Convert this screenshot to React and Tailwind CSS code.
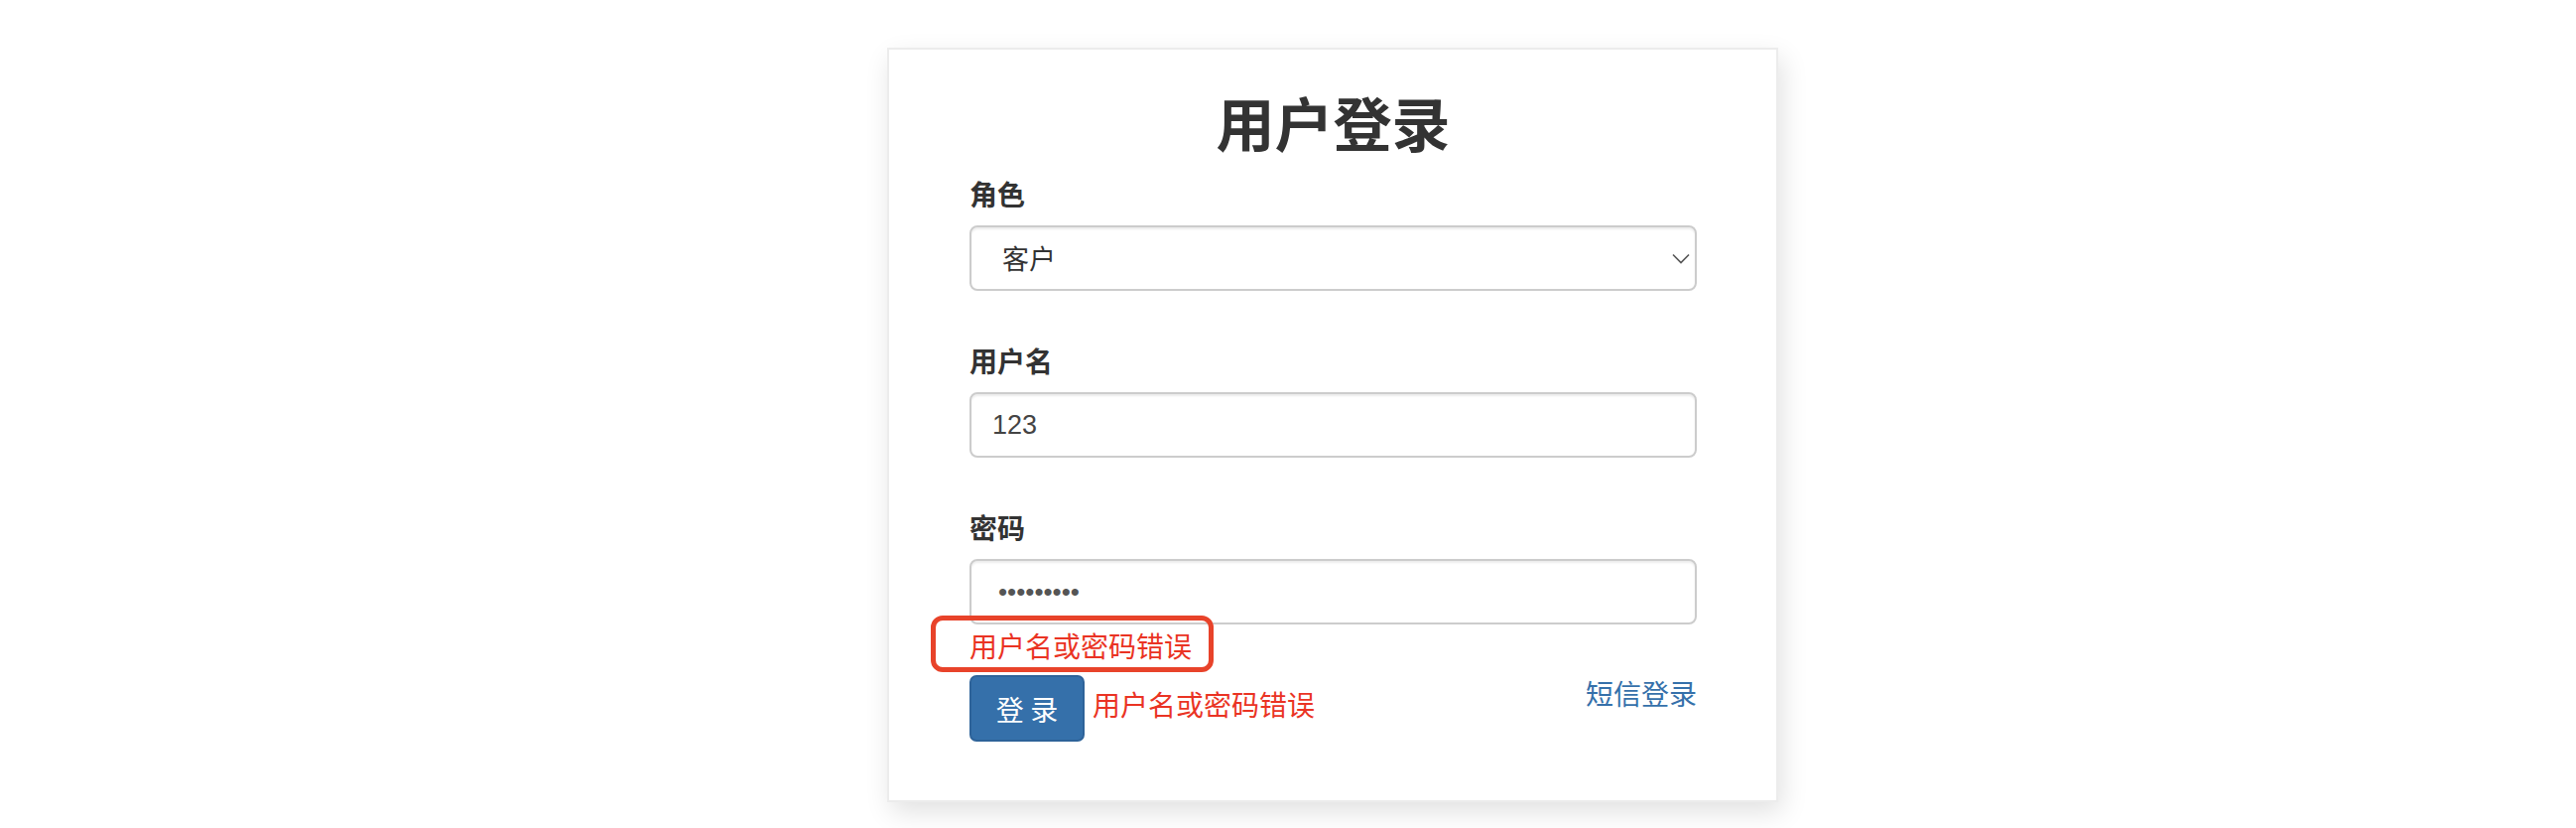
import { useState } from 'react';

const cjk = { fontFamily: '"Noto Sans CJK SC", "Liberation Sans", sans-serif' };
const latin = { fontFamily: '"Liberation Sans", "Noto Sans CJK SC", sans-serif' };

function Field({ label, first, children }) {
  return (
    <div className={first ? 'mt-[20px]' : 'mt-[50px]'}>
      <label className="block text-[28px] leading-[40px] font-bold text-[#333] mb-[12px]">{label}</label>
      {children}
    </div>
  );
}

export default function App() {
  const [role, setRole] = useState('customer');
  const [username, setUsername] = useState('123');
  const [password, setPassword] = useState('123456789');

  return (
    <div className="min-h-screen bg-white pt-[48px]" style={cjk}>
      <div className="relative ml-[894px] w-[898px] bg-white border-2 border-[#ececec] shadow-[4px_10px_25px_rgba(0,0,0,0.12)] pt-[40px] pb-[59px] pl-[81px] pr-[80px]">
        <h1 className="text-center text-[59px] leading-[65px] font-bold text-[#333]">用户登录</h1>

        <Field label="角色" first>
          <div className="relative">
            <select
              value={role}
              onChange={(e) => setRole(e.target.value)}
              className="appearance-none w-full h-[66px] bg-white border-2 border-[#cccccc] rounded-[8px] pl-[31px] text-[27px] text-[#333] outline-none shadow-[inset_0_2px_2px_rgba(0,0,0,0.075)]"
              style={cjk}
            >
              <option value="customer">客户</option>
              <option value="admin">管理员</option>
            </select>
            <svg className="absolute right-[7px] top-[28px] pointer-events-none" width="18" height="11" viewBox="0 0 18 11" fill="none">
              <path d="M1 1.5 L9 9.5 L17 1.5" stroke="#555" strokeWidth="1.6" />
            </svg>
          </div>
        </Field>

        <Field label="用户名">
          <input
            type="text"
            value={username}
            onChange={(e) => setUsername(e.target.value)}
            className="block w-full h-[66px] border-2 border-[#cccccc] rounded-[8px] px-[21px] text-[27px] text-[#444] outline-none shadow-[inset_0_2px_2px_rgba(0,0,0,0.075)]"
            style={latin}
          />
        </Field>

        <Field label="密码">
          <input
            type="password"
            value={password}
            onChange={(e) => setPassword(e.target.value)}
            className="block w-full h-[66px] border-2 border-[#cccccc] rounded-[8px] px-[27px] text-[26px] text-[#555] outline-none shadow-[inset_0_2px_2px_rgba(0,0,0,0.075)]"
            style={latin}
          />
        </Field>

        <div className="relative mt-[1px]">
          <p className="text-[28px] leading-[40px] text-[#ea3323]">用户名或密码错误</p>
          <div className="absolute -left-[39px] -top-[10px] w-[285px] h-[57px] border-[5px] border-[#e8432a] rounded-[12px] pointer-events-none"></div>
        </div>

        <div className="mt-[10px] flex justify-between items-start">
          <div className="flex items-center gap-[8px]">
            <button className="w-[116px] h-[67px] bg-[#3570aa] border-2 border-[#2e6399] rounded-[7px] text-white text-[28px] leading-[40px]">
              登 录
            </button>
            <span className="text-[28px] leading-[40px] text-[#ea3323] mb-[9px]">用户名或密码错误</span>
          </div>
          <a href="#" className="text-[28px] leading-[40px] text-[#3570aa] -mt-[2px]">短信登录</a>
        </div>
      </div>
    </div>
  );
}
